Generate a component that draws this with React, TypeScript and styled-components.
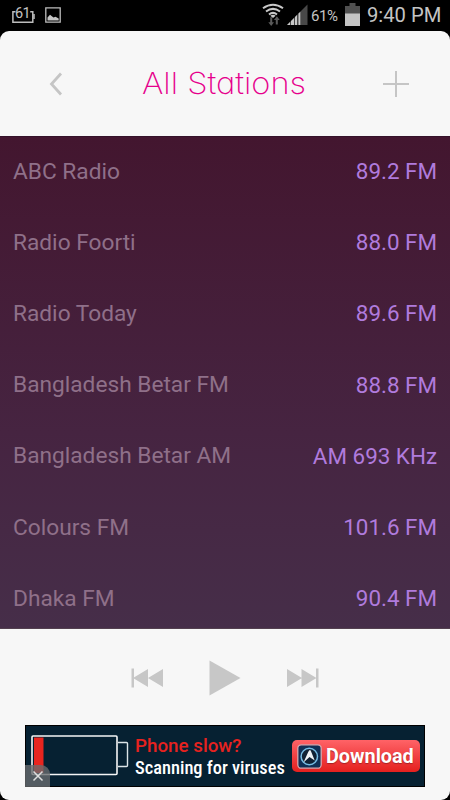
import React from "react";
import styled, { createGlobalStyle } from "styled-components";

const GlobalStyle = createGlobalStyle`
  * { box-sizing: border-box; }
  html, body { margin: 0; background: #000; }
  body { font-family: Roboto, "Open Sans", sans-serif; overflow: hidden; }
  button { border: 0; padding: 0; background: none; font: inherit; display: flex; }
  svg { display: block; }
`;

const Screen = styled.div`
  width: 450px;
  height: 800px;
  display: flex;
  flex-direction: column;
  background: #000;
`;

const StatusBar = styled.div`
  height: 31px;
  flex: none;
  display: flex;
  justify-content: space-between;
  padding: 0 9px 0 12px;
  color: #c4c4c4;
`;

const StatusGroup = styled.div`
  display: flex;
  align-items: flex-start;
`;

const Indicators = styled.div`
  display: flex;
  align-items: flex-start;
  gap: 3px;
`;

const BatteryCount = styled.div`
  position: relative;
  width: 23px;
  height: 23px;
  margin-right: 10px;
`;

const CountText = styled.span`
  position: absolute;
  left: 3px;
  top: 6px;
  font-size: 14.5px;
  line-height: 16px;
  letter-spacing: -0.6px;
`;

const Percent = styled.span`
  width: 28px;
  margin: 6px 6px 0 3px;
  font-size: 15px;
  line-height: 20px;
  letter-spacing: -0.4px;
  white-space: nowrap;
`;

const Clock = styled.span`
  margin: 3px 0 0 7px;
  width: 74px;
  font-size: 20.2px;
  line-height: 24px;
  white-space: nowrap;
`;

const Panel = styled.main`
  flex: 1;
  display: flex;
  flex-direction: column;
  background: #f7f7f7;
  border-radius: 9px;
  overflow: hidden;
`;

const Header = styled.header`
  height: 105px;
  flex: none;
  display: grid;
  grid-template-columns: 112px 1fr 108px;
  align-items: center;
  justify-items: center;
`;

const Title = styled.h1`
  margin: 0 6px 2px 0;
  font-family: Inter, sans-serif;
  font-weight: 200;
  font-size: 30.2px;
  line-height: 40px;
  font-feature-settings: "cv11";
  transform: scaleX(1.08);
  color: #e6008c;
  white-space: nowrap;
`;

const StationList = styled.ul`
  margin: 0;
  padding: 0;
  height: 493px;
  flex: none;
  list-style: none;
  overflow: hidden;
  border-top: 1px solid #34122a;
  border-bottom: 1px solid #53404f;
  background: linear-gradient(#43162f, #462441 60%, #462e49);
`;

const Station = styled.li`
  height: 71.2px;
  display: flex;
  justify-content: space-between;
  align-items: center;
  padding: 0 13px 2px;
  font-size: 22.7px;
  line-height: 30px;
  white-space: nowrap;
`;

const Name = styled.span`
  color: #8f7089;
`;

const Frequency = styled.span`
  margin-bottom: 1px;
  font-size: 22.4px;
  color: #b07bdd;
`;

const Player = styled.div`
  height: 96px;
  flex: none;
  display: flex;
  align-items: center;
  justify-content: center;
  gap: 45px;
  padding-top: 2px;
`;

const Banner = styled.aside`
  position: relative;
  width: 400px;
  height: 62px;
  margin-left: 25px;
  flex: none;
  display: flex;
  align-items: center;
  border: 1px solid #000;
  background: #062132;
`;

const BatteryArt = styled.div`
  width: 109px;
  flex: none;
`;

const Copy = styled.div`
  width: 157px;
  flex: none;
  padding-top: 1px;
  white-space: nowrap;
`;

const Question = styled.div`
  font-size: 18.8px;
  line-height: 21px;
  font-weight: 500;
  color: #e7221f;
`;

const Claim = styled.div`
  font-family: "Roboto Condensed", Roboto, sans-serif;
  font-size: 18.4px;
  line-height: 21px;
  font-weight: 500;
  letter-spacing: 0;
  color: #fff;
`;

const Download = styled.button`
  && {
    width: 128px;
    height: 32px;
    flex: none;
    align-items: center;
    gap: 4px;
    padding-left: 5px;
    border-radius: 5px;
    background: linear-gradient(#ff6367, #f14143 50%, #e5201e);
    color: #fff;
    font-size: 19.8px;
    font-weight: 700;
    text-shadow: 0 1px 1px #a52222;
  }
`;

const Dismiss = styled.button`
  && {
    position: absolute;
    left: -1px;
    bottom: -1px;
    width: 25px;
    height: 22px;
    align-items: center;
    justify-content: center;
    border-top-right-radius: 9px;
    background: rgba(105, 108, 110, 0.78);
  }
`;

const stations = [
  ["ABC Radio", "89.2 FM"],
  ["Radio Foorti", "88.0 FM"],
  ["Radio Today", "89.6 FM"],
  ["Bangladesh Betar FM", "88.8 FM"],
  ["Bangladesh Betar AM", "AM 693 KHz"],
  ["Colours FM", "101.6 FM"],
  ["Dhaka FM", "90.4 FM"],
];

const CountFrame = () => (
  <svg width="23" height="23" viewBox="0 0 23 23" fill="none" stroke="#bdbdbd" strokeWidth="1.5">
    <path d="M3.5 11.7H.9V22.2H20.8V11.7H18.2" />
    <path d="M22 14V19" />
  </svg>
);

const PictureIcon = () => (
  <svg width="17" height="24" viewBox="0 0 17 24">
    <path d="M.8 7.8H15.2V22.2H.8Z" fill="none" stroke="#bdbdbd" strokeWidth="1.3" />
    <path d="M2.5 20.5V17.5L5 14.8L8.5 17.5L10.5 16.8L13.7 18.5V20.5Z" fill="#c4c4c4" />
  </svg>
);

const WifiIcon = () => (
  <svg width="22" height="27" viewBox="0 0 22 27">
    <g fill="none" stroke="#c8c8c8" strokeWidth="2">
      <path d="M1 8.3Q11 1.2 21 8.3" />
      <path d="M4 11.5Q11 6.2 18 11.5" />
      <path d="M7 14.5Q11 11.3 15 14.5" />
    </g>
    <path d="M8.3 15.7Q11 13.8 13.7 15.7L11 18Z" fill="#c8c8c8" />
    <path d="M8.2 17.3H10.2V22.2H12L9.2 26L6.3 22.2H8.2ZM13.8 24.5V20H12L14.9 16.2L17.7 20H15.8V24.5Z" fill="#5a5a5a" />
  </svg>
);

const SignalIcon = () => (
  <svg width="21" height="26" viewBox="0 0 21 26">
    <path d="M0 25L20.5 4.5V25Z" fill="#484848" />
    <path d="M0 25L3 22V25ZM4 25V21L7 18V25ZM8 25V17L10 15V25ZM11.5 25V13.5L13.3 11.7V25Z" fill="#c8c8c8" />
  </svg>
);

const BatteryIcon = () => (
  <svg width="15" height="27" viewBox="0 0 15 27">
    <path d="M0 6H4.5V3H10.5V6H15V14H0Z" fill="#505050" />
    <path d="M0 13.5H15V26H0Z" fill="#c4c4c4" />
  </svg>
);

const BackIcon = () => (
  <svg width="14" height="24" viewBox="0 0 14 24">
    <path d="M12 1.5L2.5 12L12 22.5" fill="none" stroke="#c5c5c5" strokeWidth="2.8" />
  </svg>
);

const PlusIcon = () => (
  <svg width="26" height="26" viewBox="0 0 26 26">
    <path d="M13 0V26M0 13H26" stroke="#c5c5c5" strokeWidth="2" />
  </svg>
);

const PreviousIcon = () => (
  <svg width="33" height="20" viewBox="0 0 33 20" fill="#c7c7c7">
    <path d="M.5.5H3V19.5H.5ZM2 10L17 1V19ZM17 10L32 1V19Z" />
  </svg>
);

const PlayIcon = () => (
  <svg width="32" height="36" viewBox="0 0 32 36">
    <path d="M.5.5L31.5 18L.5 35.5Z" fill="#c7c7c7" />
  </svg>
);

const NextIcon = () => (
  <svg width="33" height="20" viewBox="0 0 33 20" fill="#c7c7c7">
    <path d="M30 .5H32.5V19.5H30ZM1 1L16 10L1 19ZM15.5 1L30.5 10L15.5 19Z" />
  </svg>
);

const LowBattery = () => (
  <svg width="104" height="42" viewBox="0 0 104 42">
    <rect x="6" y="1" width="85" height="38.5" rx="1" fill="none" stroke="#f4f5f5" strokeWidth="1.6" />
    <path d="M92 7.5H100.5Q101.5 7.5 101.5 8.5V30.5Q101.5 31.5 100.5 31.5H92" fill="none" stroke="#dce5e8" strokeWidth="1.4" />
    <path d="M8 2.5H17.5V38H8Z" fill="#e8251f" />
  </svg>
);

const AppIcon = () => (
  <svg width="25" height="25" viewBox="0 0 25 25">
    <rect x=".8" y=".8" width="23.4" height="23.4" rx="3.5" fill="#102f55" stroke="#d9a7ae" strokeWidth="1.3" />
    <circle cx="12.3" cy="12.5" r="8.2" fill="#102235" stroke="#76bce3" strokeWidth="1.5" />
    <path d="M6.5 18.5L11.2 8Q13.2 4.2 14.2 7.8L17.7 16.5L12.5 13Z" fill="#eef2f5" />
  </svg>
);

const CloseIcon = () => (
  <svg width="12" height="12" viewBox="0 0 12 12">
    <path d="M1.5 1.5L10.5 10.5M10.5 1.5L1.5 10.5" stroke="#dedede" strokeWidth="1.5" />
  </svg>
);

export default function App() {
  return (
    <Screen>
      <GlobalStyle />
      <StatusBar>
        <StatusGroup>
          <BatteryCount><CountFrame /><CountText>61</CountText></BatteryCount>
          <PictureIcon />
        </StatusGroup>
        <StatusGroup>
          <Indicators><WifiIcon /><SignalIcon /></Indicators>
          <Percent>61%</Percent>
          <BatteryIcon />
          <Clock>9:40 PM</Clock>
        </StatusGroup>
      </StatusBar>
      <Panel>
        <Header>
          <button aria-label="Back"><BackIcon /></button>
          <Title>All Stations</Title>
          <button aria-label="Add station"><PlusIcon /></button>
        </Header>
        <StationList>
          {stations.map(([name, frequency]) => (
            <Station key={name}><Name>{name}</Name><Frequency>{frequency}</Frequency></Station>
          ))}
        </StationList>
        <Player>
          <button aria-label="Previous"><PreviousIcon /></button>
          <button aria-label="Play"><PlayIcon /></button>
          <button aria-label="Next"><NextIcon /></button>
        </Player>
        <Banner>
          <BatteryArt><LowBattery /></BatteryArt>
          <Copy>
            <Question>Phone slow?</Question>
            <Claim>Scanning for viruses</Claim>
          </Copy>
          <Download><AppIcon />Download</Download>
          <Dismiss aria-label="Close"><CloseIcon /></Dismiss>
        </Banner>
      </Panel>
    </Screen>
  );
}
